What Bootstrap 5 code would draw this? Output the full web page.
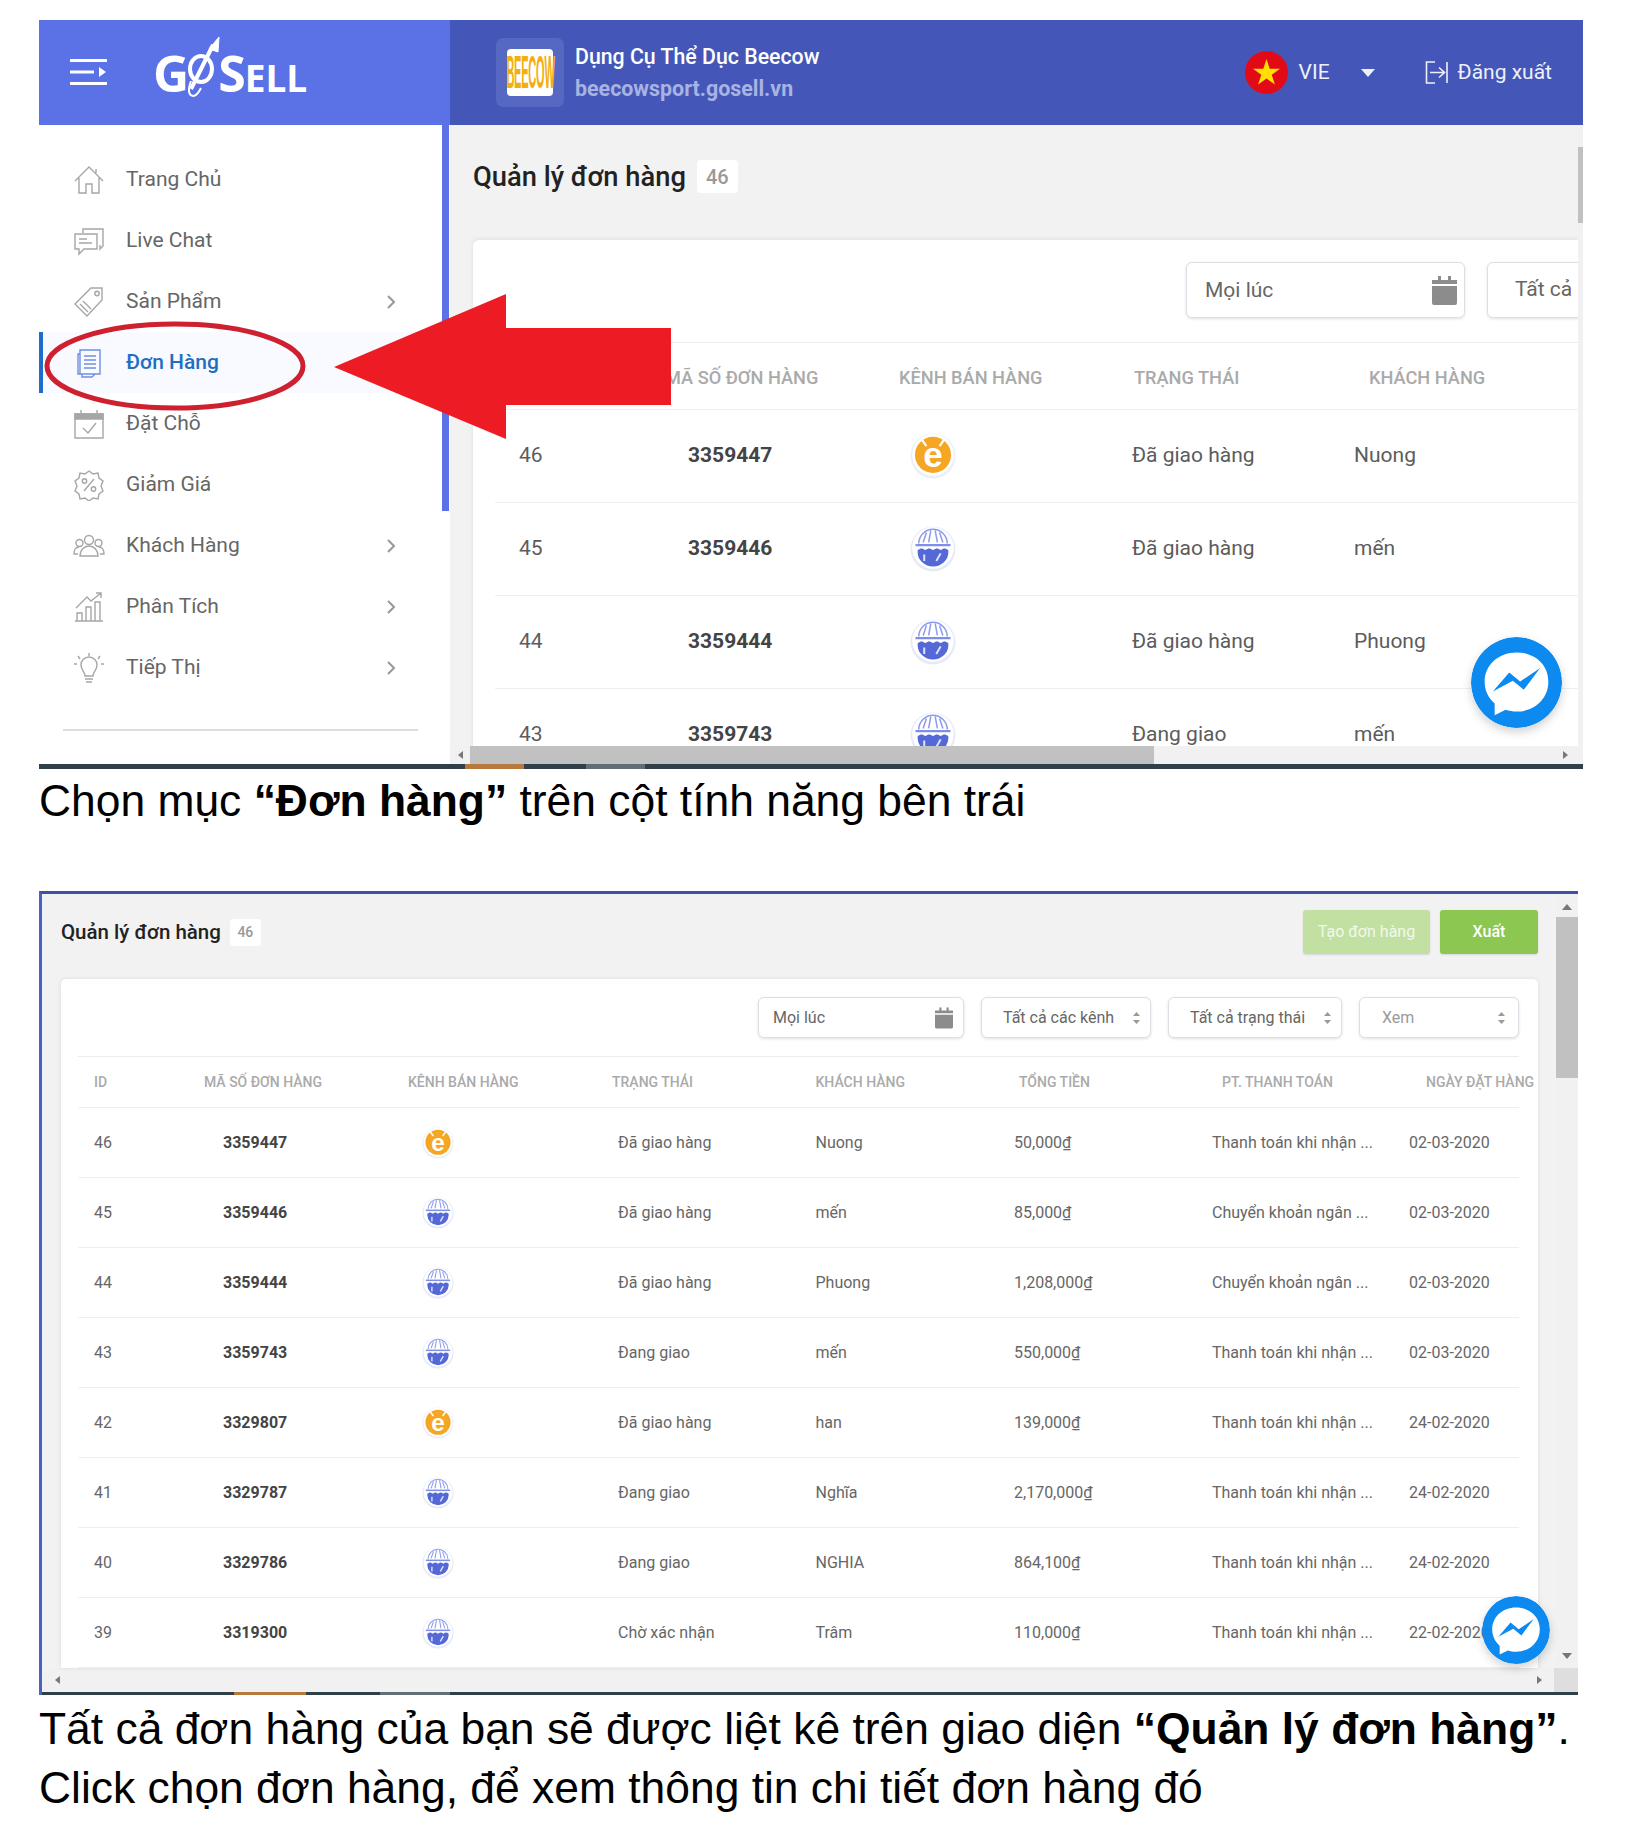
<!DOCTYPE html>
<html lang="vi">
<head>
    <meta charset="UTF-8">
    <meta name="viewport" content="width=device-width, initial-scale=1.0">
    <title>Quản lý đơn hàng - GoSell</title>
    <link href="https://cdn.jsdelivr.net/npm/bootstrap@5.3.0/dist/css/bootstrap.min.css" rel="stylesheet">
    <style>
        body {
            background: #fff;
            padding: 20px 0 0 39px;
            font-family: Roboto, "Liberation Sans", sans-serif;
            color: #555;
        }
        /* --- panel 1 --- */
        .shot-one {
            width: 1544px;
            height: 749px;
            overflow: hidden;
            position: relative;
            background: #fff;
        }
        .top-left {
            width: 411px;
            height: 105px;
            background: #5a72e6;
            padding-left: 31px;
            flex-shrink: 0;
        }
        .top-right {
            height: 105px;
            background: #4457b8;
            padding: 0 31px 0 46px;
            color: #fff;
        }
        .burger { width: 37px; height: 28px; margin-right: 46px; }
        .logo-text {
            position: relative;
            font-family: "Open Sans", Lato, sans-serif;
            font-size: 50px;
            font-weight: 700;
            color: #fff;
            line-height: 1;
            white-space: nowrap;
            letter-spacing: -1px;
        }
        .logo-small { font-size: 37px; letter-spacing: 0; }
        .logo-rocket { position: absolute; left: 32px; top: -11px; width: 36px; height: 60px; }
        .shop-box {
            width: 68px;
            height: 69px;
            background: #5668c2;
            border-radius: 7px;
            margin-right: 11px;
        }
        .shop-img {
            width: 46px;
            height: 47px;
            background: #fff;
            border-radius: 4px;
        }
        .shop-img span {
            display: block;
            color: #f3ae10;
            font-family: "Liberation Sans", sans-serif;
            font-weight: 700;
            font-size: 46px;
            line-height: 47px;
            transform: scaleX(0.24);
            letter-spacing: -1px;
        }
        .shop-name { font-size: 21.3px; font-weight: 500; line-height: 32px; }
        .shop-url { font-size: 21.4px; font-weight: 700; line-height: 32px; color: #a9b3e2; }
        .flag { width: 43px; height: 43px; margin-right: 11px; }
        .lang-txt { font-size: 21px; color: #eef0fa; margin-right: 31px; }
        .caret-down {
            width: 0;
            height: 0;
            border-left: 7px solid transparent;
            border-right: 7px solid transparent;
            border-top: 8px solid #eef0fa;
            margin-right: 50px;
        }
        .out-icon { width: 23px; height: 23px; margin-right: 10px; }
        .out-txt { font-size: 21px; color: #eef0fa; }

        .side-wrap { width: 411px; flex-shrink: 0; height: 639px; background: #fff; }
        .side-list { width: 403px; padding-top: 24px; }
        .side-list .nav-link {
            height: 61px;
            padding: 0 47px 0 34px;
            color: #666;
            font-size: 21px;
            gap: 21px;
        }
        .side-list .nav-link.active {
            background: #f8faff;
            color: #1e6fc4;
            font-weight: 500;
            border-left: 4px solid #1e6dc9;
            padding-left: 30px;
        }
        .side-ico { width: 32px; height: 32px; flex-shrink: 0; fill: none; stroke: #a6a6a6; stroke-width: 1.4; }
        .side-ico-on { stroke: #6f8fe0; }
        .side-chev { width: 8px; height: 14px; margin-left: auto; fill: none; stroke: #999; stroke-width: 2; }
        .side-sep { height: 2px; background: #ddd; margin: 31px 24px 0; }
        .side-thumb { width: 7px; height: 386px; background: #5a72e6; margin-right: 1px; }

        .main-one { background: #f2f2f2; height: 639px; width: 1133px; }
        .main-view { height: 621px; overflow: hidden; }
        .title-one { height: 115px; padding: 0 0 10px 23px; }
        .title-one h1 { font-size: 27.3px; font-weight: 500; color: #222; margin: 0; }
        .count-one {
            width: 41px;
            height: 33px;
            margin-left: 11px;
            background: #fff;
            border-radius: 4px;
            color: #999;
            font-size: 20px;
            font-weight: 500;
            margin-bottom: 2px;
        }
        .sheet-one {
            width: 1105px;
            height: 510px;
            margin-left: 23px;
            background: #fff;
            border-radius: 6px 0 0 0;
            box-shadow: 0 -1px 4px rgba(0, 0, 0, .08);
            overflow: hidden;
        }
        .filter-one { height: 102px; padding: 22px 0 0 713px; gap: 22px; }
        .picker {
            flex-shrink: 0;
            background: #fff;
            border: 1px solid #dcdfe5;
            border-radius: 6px;
            box-shadow: 0 1px 3px rgba(0, 0, 0, .12);
            color: #666;
            white-space: nowrap;
        }
        .filter-one .picker { height: 56px; font-size: 21px; }
        .picker-date { width: 279px; padding: 1px 7px 0 18px; }
        .picker-more { width: 200px; padding: 0 0 0 27px; }
        .cal-lg { width: 25px; height: 29px; fill: #8c8c8c; }

        .order-table { table-layout: fixed; margin: 0; border-top: 1px solid #ececec; }
        .order-table th, .order-table td {
            padding: 0;
            vertical-align: middle;
            white-space: nowrap;
            border-bottom: 1px solid #efefef;
            box-shadow: none;
        }
        .order-table th { color: #aaa; font-weight: 500; }
        .order-table td { color: #5c5c5c; }
        .order-table td.code-cell { font-weight: 700; color: #444; }

        .table-one { width: 1159px; margin-left: 22px; }
        .table-one th { height: 67px; font-size: 18.2px; padding-top: 4px; }
        .table-one td { height: 93px; font-size: 21px; }
        .w1a { width: 170px; } .w1b { width: 234px; } .w1c { width: 233px; } .w1d { width: 222px; } .w1e { width: 300px; }
        .table-one .c-id { padding-left: 24px; }
        .table-one td.c-code { padding-left: 23px; }
        .table-one td.c-chan { padding-left: 11px; }
        .table-one th.c-stat { padding-left: 2px; }
        .table-one th.c-cust { padding-left: 15px; }
        .chan-lg { width: 46px; height: 46px; display: block; }
        .chan-sm { width: 32px; height: 32px; display: block; }

        .hbar-one { height: 18px; background: #f1f1f1; padding-left: 8px; }
        .hbar-thumb { width: 684px; height: 18px; background: #c1c1c1; margin-left: 7px; }
        .arrow-l { width: 0; height: 0; border-top: 4px solid transparent; border-bottom: 4px solid transparent; border-right: 5px solid #777; }
        .arrow-r { width: 0; height: 0; border-top: 4px solid transparent; border-bottom: 4px solid transparent; border-left: 5px solid #777; }
        .hbar-one .arrow-r { margin-left: auto; margin-right: 10px; }
        .vbar-one { width: 5px; background: #f1f1f1; padding-top: 22px; flex-shrink: 0; }
        .vbar-one div { height: 76px; background: #c1c1c1; }

        .dark-strip { height: 5px; background: #2f4048; }
        .seg-orange { position: absolute; top: 0; bottom: 0; background: #b87a3c; }
        .seg-grey { position: absolute; top: 0; bottom: 0; background: #5f6f75; }
        .strip-one { position: relative; }
        .strip-one .seg-orange { left: 426px; width: 59px; }
        .strip-one .seg-grey { left: 547px; width: 59px; }

        .mark-over { position: absolute; left: 0; top: 0; width: 700px; height: 460px; pointer-events: none; }
        .msg-btn { position: absolute; border-radius: 50%; box-shadow: 0 4px 10px rgba(0, 0, 0, .18); }
        .msg-big { left: 1432px; top: 617px; width: 91px; height: 91px; }
        .msg-small { left: 1440px; top: 702px; width: 68px; height: 68px; }

        /* --- captions --- */
        .note-text {
            font-family: "Liberation Sans", Arial, sans-serif;
            color: #000;
            font-size: 44.4px;
            line-height: 59px;
            margin: 0;
            white-space: nowrap;
        }
        .note-one { height: 122px; padding-top: 2px; }
        .note-two { padding-top: 4px; }

        /* --- panel 2 --- */
        .shot-two {
            width: 1539px;
            height: 804px;
            position: relative;
            background: #f2f2f2;
            border-top: 3px solid #3f51a5;
            border-left: 3px solid #4a62c0;
            overflow: hidden;
        }
        .body-two { height: 774px; }
        .main-two { width: 1511px; }
        .title-two { height: 85px; padding: 16px 15px 0 19px; }
        .title-two h2 { font-size: 20.5px; font-weight: 500; color: #222; margin: 0; }
        .title-left { height: 44px; }
        .count-two {
            width: 31px;
            height: 27px;
            margin-left: 9px;
            background: #fff;
            border-radius: 3px;
            color: #999;
            font-size: 14px;
            font-weight: 500;
        }
        .btn.btn-make, .btn.btn-export {
            height: 44px;
            padding: 0;
            border: 0;
            border-radius: 3px;
            color: #fff;
            font-size: 16px;
            box-shadow: 0 1px 2px rgba(0, 0, 0, .12);
        }
        .btn.btn-make { width: 127px; background: #c3e0a3; color: #f2f8ea; margin-right: 10px; }
        .btn.btn-export { width: 98px; background: #8bc751; font-weight: 500; }
        .sheet-two {
            width: 1477px;
            height: 689px;
            margin-left: 19px;
            background: #fff;
            border-radius: 5px 5px 0 0;
            box-shadow: 0 0 4px rgba(0, 0, 0, .1);
            overflow: hidden;
        }
        .filter-two { height: 77px; padding: 18px 19px 0 0; gap: 17px; }
        .filter-two .picker { height: 41px; font-size: 16px; }
        .pick-a { width: 206px; padding: 0 10px 0 14px; }
        .pick-b { width: 170px; padding: 0 10px 0 21px; }
        .pick-c { width: 174px; padding: 0 10px 0 21px; }
        .pick-d { width: 160px; padding: 0 13px 0 22px; color: #999 !important; }
        .cal-sm { width: 18px; height: 22px; fill: #8c8c8c; }
        .updown { width: 7px; height: 12px; fill: #999; }

        .table-two { width: 1441px; margin-left: 17px; }
        .table-two th { height: 51px; font-size: 14px; }
        .table-two td { height: 70px; font-size: 16px; color: #666; }
        .w2a { width: 126px; } .w2b { width: 204px; } .w2c { width: 204px; } .w2d { width: 203.5px; }
        .w2e { width: 198.5px; } .w2f { width: 198px; } .w2g { width: 197px; } .w2h { width: 110px; }
        .table-two .c-id { padding-left: 16px; }
        .table-two td.c-code { padding-left: 19px; }
        .table-two td.c-chan { padding-left: 14px; }
        .table-two td.c-stat { padding-left: 6px; }
        .table-two th.c-total { padding-left: 5px; }
        .table-two th.c-pay { padding-left: 10px; }
        .table-two th.c-date { padding-left: 17px; }

        .vbar-two { width: 22px; margin-left: 3px; background: #f1f1f1; }
        .arrow-u { width: 0; height: 0; border-left: 5px solid transparent; border-right: 5px solid transparent; border-bottom: 6px solid #777; margin: 10px auto 7px; }
        .arrow-d { width: 0; height: 0; border-left: 5px solid transparent; border-right: 5px solid transparent; border-top: 6px solid #777; margin: auto auto 9px; }
        .vbar-two .thumb-v { height: 161px; background: #c1c1c1; }
        .hbar-two { height: 24px; background: #f1f1f1; padding-left: 13px; }
        .hbar-two .arrow-r { margin-left: auto; margin-right: 12px; }
        .corner-two { width: 24px; height: 24px; background: #dedede; }
        .strip-two { height: 3px; position: relative; }
        .strip-two .seg-orange { left: 192px; width: 72px; }
        .strip-two .seg-grey { left: 338px; width: 70px; }
    </style>
</head>
<body>
    <!-- shared icons -->
    <svg class="d-none">
        <symbol id="chan-e" viewBox="0 0 42 42">
            <circle cx="21" cy="21" r="20.500" fill="#eceef8"/>
            <circle cx="21" cy="20" r="19" fill="#fff"/>
            <circle cx="21" cy="20" r="16.500" fill="#f5a623"/>
            <path d="M10 5l5 7M32 5l-5 7" stroke="#fff" stroke-width="2"/>
            <text x="21" y="31" text-anchor="middle" font-family="Liberation Sans, sans-serif" font-weight="700" font-size="32" fill="#fff">e</text>
        </symbol>
        <symbol id="chan-shop" viewBox="0 0 42 42">
            <circle cx="21" cy="21" r="20.500" fill="#e6e9f8"/>
            <circle cx="21" cy="20" r="19" fill="#fff"/>
            <path d="M8 16a13 13 0 0 1 26 0M12 15l3-9M17 15l2-11M25 15l-2-11M30 15l-3-9" fill="none" stroke="#8d9cec" stroke-width="1.4"/>
            <path d="M5 17.500h32" stroke="#7f8fe8" stroke-width="2"/>
            <path d="M7 22c3-2 4-2 7 0 3-2 4-2 7 0 3-2 4-2 7 0 3-2 4-2 7 0v2a14 13 0 0 1-28 0z" fill="#5468d8"/>
            <path d="M13 26v6M24 32l4-7" stroke="#dfe4fb" stroke-width="1.8"/>
        </symbol>
        <symbol id="msg" viewBox="0 0 100 100">
            <circle cx="50" cy="50" r="50" fill="#0d8af0"/>
            <path d="M50 17c-20 0-35 14-35 32 0 10 4 18 11 24v13l12-6c4 1 8 2 12 2 20 0 35-14 35-33S70 17 50 17z" fill="#fff"/>
            <path d="M24 60l18-21 12 10 22-15-18 24-12-10z" fill="#0d8af0"/>
        </symbol>
        <symbol id="cal" viewBox="0 0 25 29">
            <path d="M6 0h3v5H6zM16 0h3v5h-3zM0 4h25v4H0zM0 10h25v17a2 2 0 0 1-2 2H2a2 2 0 0 1-2-2z"/>
        </symbol>
        <symbol id="updown" viewBox="0 0 7 12">
            <path d="M3.500 0L7 4H0zM3.500 12L0 8h7z"/>
        </symbol>
    </svg>

    <!-- first screenshot -->
    <div class="shot-one">
        <header class="d-flex">
            <div class="top-left d-flex align-items-center">
                <svg class="burger" viewBox="0 0 37 28" fill="#fff">
                    <path d="M0 0h37v3H0zM0 23h37v3H0zM0 11.500h24v3H0zM29 8l7 5-7 5z"/>
                </svg>
                <div class="logo-text">G<span class="opacity-0">o</span>S<span class="logo-small">ELL</span>
                    <svg class="logo-rocket" viewBox="0 0 36 60" fill="none" stroke="#fff">
                        <ellipse cx="16" cy="32" rx="11" ry="13" stroke-width="4"/>
                        <path d="M6 52L28 8" stroke-width="4"/>
                        <path d="M24 12L34 0l-1 15z" fill="#fff" stroke-width="1"/>
                        <path d="M6 44c-3 8-3 14 2 15 3 0 6-4 8-8" stroke-width="2"/>
                    </svg>
                </div>
            </div>
            <div class="top-right flex-fill d-flex align-items-center">
                <div class="shop-box d-flex align-items-center justify-content-center">
                    <div class="shop-img d-flex justify-content-center"><span>BEECOW</span></div>
                </div>
                <div>
                    <div class="shop-name">Dụng Cụ Thể Dục Beecow</div>
                    <div class="shop-url">beecowsport.gosell.vn</div>
                </div>
                <svg class="flag ms-auto" viewBox="0 0 43 43">
                    <circle cx="21.500" cy="21.500" r="21.500" fill="#e30a17"/>
                    <path d="M21.500 8l3.200 9.800H35l-8.300 6 3.200 9.800-8.400-6-8.400 6 3.200-9.800-8.300-6h10.300z" fill="#ffe000"/>
                </svg>
                <span class="lang-txt">VIE</span>
                <span class="caret-down"></span>
                <svg class="out-icon" viewBox="0 0 23 23" fill="none" stroke="#eef0fa" stroke-width="1.6">
                    <path d="M10 1H1.500v21H10M5 11.500h14M14 6.500l5.500 5-5.500 5M22 1v21"/>
                </svg>
                <span class="out-txt">Đăng xuất</span>
            </div>
        </header>
        <div class="d-flex">
            <aside class="side-wrap d-flex justify-content-between">
                <div class="side-list">
                    <nav class="nav flex-column">
                        <a class="nav-link d-flex align-items-center" href="#">
                            <svg class="side-ico" viewBox="0 0 32 32"><path d="M2 17L16 3l14 14M6 14v15h7v-9h6v9h7V14M23 5v4"/></svg>
                            Trang Chủ
                        </a>
                        <a class="nav-link d-flex align-items-center" href="#">
                            <svg class="side-ico" viewBox="0 0 32 32"><path d="M10 8V4h20v17l-3 3v-4"/><path d="M2 9h22v15H11l-5 5v-5H2zM6 14h8M6 18h13"/></svg>
                            Live Chat
                        </a>
                        <a class="nav-link d-flex align-items-center" href="#">
                            <svg class="side-ico" viewBox="0 0 32 32"><path d="M18 2h11v12L14 30 2 18z"/><circle cx="24" cy="7.500" r="2.200"/><path d="M7 18l8 8M10 15l8 8"/></svg>
                            Sản Phẩm
                            <svg class="side-chev" viewBox="0 0 8 14"><path d="M1 1l6 6-6 6"/></svg>
                        </a>
                        <a class="nav-link d-flex align-items-center active" href="#">
                            <svg class="side-ico side-ico-on" viewBox="0 0 32 32"><path d="M7 3h20v24H7zM7 27H5V7h2M11 9h12M11 13h12M11 17h12M11 21h12M9 27v3h10l3-3"/></svg>
                            Đơn Hàng
                        </a>
                        <a class="nav-link d-flex align-items-center" href="#">
                            <svg class="side-ico" viewBox="0 0 32 32"><path d="M2 6h28v24H2zM8 2v6M24 2v6M10 20l5 5 8-10"/><path d="M2 6h28v5H2z" fill="#a6a6a6"/></svg>
                            Đặt Chỗ
                        </a>
                        <a class="nav-link d-flex align-items-center" href="#">
                            <svg class="side-ico" viewBox="0 0 32 32"><path d="M16 2l4 3 5-1 1 5 4 3-2 5 2 5-4 3-1 5-5-1-4 3-4-3-5 1-1-5-4-3 2-5-2-5 4-3 1-5 5 1zM21 10L11 22"/><circle cx="11.500" cy="12" r="2.200"/><circle cx="20.500" cy="20" r="2.200"/></svg>
                            Giảm Giá
                        </a>
                        <a class="nav-link d-flex align-items-center" href="#">
                            <svg class="side-ico" viewBox="0 0 32 32"><circle cx="16" cy="10" r="4.500"/><circle cx="6.500" cy="13" r="3.500"/><circle cx="25.500" cy="13" r="3.500"/><path d="M7 26c0-6 4-10 9-10s9 4 9 10zM5 24H1c0-4 2-7 5-7M27 24h4c0-4-2-7-5-7"/></svg>
                            Khách Hàng
                            <svg class="side-chev" viewBox="0 0 8 14"><path d="M1 1l6 6-6 6"/></svg>
                        </a>
                        <a class="nav-link d-flex align-items-center" href="#">
                            <svg class="side-ico" viewBox="0 0 32 32"><path d="M2 30h28M4 30v-8h5v8M13 30V16h5v14M22 30V11h5v19M3 17L14 6l4 4L28 2M23 2h5v5"/></svg>
                            Phân Tích
                            <svg class="side-chev" viewBox="0 0 8 14"><path d="M1 1l6 6-6 6"/></svg>
                        </a>
                        <a class="nav-link d-flex align-items-center" href="#">
                            <svg class="side-ico" viewBox="0 0 32 32"><path d="M12 24c0-4-4-6-4-11a8 8 0 0 1 16 0c0 5-4 7-4 11zM12 27h8M13 30h6M16 1v3M5 4l2 3M27 4l-2 3M1 12h3M31 12h-3"/></svg>
                            Tiếp Thị
                            <svg class="side-chev" viewBox="0 0 8 14"><path d="M1 1l6 6-6 6"/></svg>
                        </a>
                    </nav>
                    <div class="side-sep"></div>
                </div>
                <div class="side-thumb"></div>
            </aside>
            <main class="main-one d-flex">
                <div class="flex-fill">
                    <div class="main-view">
                        <div class="title-one d-flex align-items-center">
                            <h1>Quản lý đơn hàng</h1>
                            <span class="count-one d-flex align-items-center justify-content-center">46</span>
                        </div>
                        <div class="sheet-one">
                            <div class="filter-one d-flex">
                                <div class="picker picker-date d-flex align-items-center justify-content-between">
                                    <span>Mọi lúc</span>
                                    <svg class="cal-lg"><use href="#cal"/></svg>
                                </div>
                                <div class="picker picker-more d-flex align-items-center">Tất cả các kênh</div>
                            </div>
                            <table class="table order-table table-one">
                                <colgroup><col class="w1a"><col class="w1b"><col class="w1c"><col class="w1d"><col class="w1e"></colgroup>
                                <thead>
                                    <tr><th class="c-id"></th><th class="c-code">MÃ SỐ ĐƠN HÀNG</th><th class="c-chan">KÊNH BÁN HÀNG</th><th class="c-stat">TRẠNG THÁI</th><th class="c-cust">KHÁCH HÀNG</th></tr>
                                </thead>
                                <tbody>
                                    <tr><td class="c-id">46</td><td class="c-code code-cell">3359447</td><td class="c-chan"><svg class="chan-lg"><use href="#chan-e"/></svg></td><td>Đã giao hàng</td><td>Nuong</td></tr>
                                    <tr><td class="c-id">45</td><td class="c-code code-cell">3359446</td><td class="c-chan"><svg class="chan-lg"><use href="#chan-shop"/></svg></td><td>Đã giao hàng</td><td>mến</td></tr>
                                    <tr><td class="c-id">44</td><td class="c-code code-cell">3359444</td><td class="c-chan"><svg class="chan-lg"><use href="#chan-shop"/></svg></td><td>Đã giao hàng</td><td>Phuong</td></tr>
                                    <tr><td class="c-id">43</td><td class="c-code code-cell">3359743</td><td class="c-chan"><svg class="chan-lg"><use href="#chan-shop"/></svg></td><td>Đang giao</td><td>mến</td></tr>
                                </tbody>
                            </table>
                        </div>
                    </div>
                    <div class="hbar-one d-flex align-items-center">
                        <span class="arrow-l"></span>
                        <div class="hbar-thumb"></div>
                        <span class="arrow-r"></span>
                    </div>
                </div>
                <div class="vbar-one"><div></div></div>
            </main>
        </div>
        <div class="dark-strip strip-one"><span class="seg-orange"></span><span class="seg-grey"></span></div>

        <!-- red marks drawn over the screenshot -->
        <svg class="mark-over" viewBox="0 0 700 460">
            <ellipse cx="136" cy="346" rx="128" ry="42" fill="none" stroke="#cf2030" stroke-width="5"/>
            <path d="M295 347L467 274v34h165v77H467v34z" fill="#ed1c24"/>
        </svg>
        <svg class="msg-btn msg-big"><use href="#msg"/></svg>
    </div>

    <div class="note-one">
        <p class="note-text">Chọn mục <b>“Đơn hàng”</b> trên cột tính năng bên trái</p>
    </div>

    <!-- second screenshot -->
    <div class="shot-two">
        <div class="body-two d-flex">
            <div class="main-two">
                <div class="title-two d-flex justify-content-between">
                    <div class="title-left d-flex align-items-center">
                        <h2>Quản lý đơn hàng</h2>
                        <span class="count-two d-flex align-items-center justify-content-center">46</span>
                    </div>
                    <div class="d-flex">
                        <button type="button" class="btn btn-make">Tạo đơn hàng</button>
                        <button type="button" class="btn btn-export">Xuất</button>
                    </div>
                </div>
                <div class="sheet-two">
                    <div class="filter-two d-flex justify-content-end">
                        <div class="picker pick-a d-flex align-items-center justify-content-between"><span>Mọi lúc</span><svg class="cal-sm"><use href="#cal"/></svg></div>
                        <div class="picker pick-b d-flex align-items-center justify-content-between"><span>Tất cả các kênh</span><svg class="updown"><use href="#updown"/></svg></div>
                        <div class="picker pick-c d-flex align-items-center justify-content-between"><span>Tất cả trạng thái</span><svg class="updown"><use href="#updown"/></svg></div>
                        <div class="picker pick-d d-flex align-items-center justify-content-between"><span>Xem</span><svg class="updown"><use href="#updown"/></svg></div>
                    </div>
                    <table class="table order-table table-two">
                        <colgroup><col class="w2a"><col class="w2b"><col class="w2c"><col class="w2d"><col class="w2e"><col class="w2f"><col class="w2g"><col class="w2h"></colgroup>
                        <thead>
                            <tr><th class="c-id">ID</th><th>MÃ SỐ ĐƠN HÀNG</th><th>KÊNH BÁN HÀNG</th><th>TRẠNG THÁI</th><th>KHÁCH HÀNG</th><th class="c-total">TỔNG TIỀN</th><th class="c-pay">PT. THANH TOÁN</th><th class="c-date">NGÀY ĐẶT HÀNG</th></tr>
                        </thead>
                        <tbody>
                            <tr><td class="c-id">46</td><td class="c-code code-cell">3359447</td><td class="c-chan"><svg class="chan-sm"><use href="#chan-e"/></svg></td><td class="c-stat">Đã giao hàng</td><td>Nuong</td><td>50,000₫</td><td>Thanh toán khi nhận ...</td><td>02-03-2020</td></tr>
                            <tr><td class="c-id">45</td><td class="c-code code-cell">3359446</td><td class="c-chan"><svg class="chan-sm"><use href="#chan-shop"/></svg></td><td class="c-stat">Đã giao hàng</td><td>mến</td><td>85,000₫</td><td>Chuyển khoản ngân ...</td><td>02-03-2020</td></tr>
                            <tr><td class="c-id">44</td><td class="c-code code-cell">3359444</td><td class="c-chan"><svg class="chan-sm"><use href="#chan-shop"/></svg></td><td class="c-stat">Đã giao hàng</td><td>Phuong</td><td>1,208,000₫</td><td>Chuyển khoản ngân ...</td><td>02-03-2020</td></tr>
                            <tr><td class="c-id">43</td><td class="c-code code-cell">3359743</td><td class="c-chan"><svg class="chan-sm"><use href="#chan-shop"/></svg></td><td class="c-stat">Đang giao</td><td>mến</td><td>550,000₫</td><td>Thanh toán khi nhận ...</td><td>02-03-2020</td></tr>
                            <tr><td class="c-id">42</td><td class="c-code code-cell">3329807</td><td class="c-chan"><svg class="chan-sm"><use href="#chan-e"/></svg></td><td class="c-stat">Đã giao hàng</td><td>han</td><td>139,000₫</td><td>Thanh toán khi nhận ...</td><td>24-02-2020</td></tr>
                            <tr><td class="c-id">41</td><td class="c-code code-cell">3329787</td><td class="c-chan"><svg class="chan-sm"><use href="#chan-shop"/></svg></td><td class="c-stat">Đang giao</td><td>Nghĩa</td><td>2,170,000₫</td><td>Thanh toán khi nhận ...</td><td>24-02-2020</td></tr>
                            <tr><td class="c-id">40</td><td class="c-code code-cell">3329786</td><td class="c-chan"><svg class="chan-sm"><use href="#chan-shop"/></svg></td><td class="c-stat">Đang giao</td><td>NGHIA</td><td>864,100₫</td><td>Thanh toán khi nhận ...</td><td>24-02-2020</td></tr>
                            <tr><td class="c-id">39</td><td class="c-code code-cell">3319300</td><td class="c-chan"><svg class="chan-sm"><use href="#chan-shop"/></svg></td><td class="c-stat">Chờ xác nhận</td><td>Trâm</td><td>110,000₫</td><td>Thanh toán khi nhận ...</td><td>22-02-2020</td></tr>
                        </tbody>
                    </table>
                </div>
            </div>
            <div class="vbar-two d-flex flex-column">
                <span class="arrow-u"></span>
                <div class="thumb-v"></div>
                <span class="arrow-d"></span>
            </div>
        </div>
        <div class="hbar-two d-flex align-items-center">
            <span class="arrow-l"></span>
            <span class="arrow-r"></span>
            <div class="corner-two"></div>
        </div>
        <div class="dark-strip strip-two"><span class="seg-orange"></span><span class="seg-grey"></span></div>
        <svg class="msg-btn msg-small"><use href="#msg"/></svg>
    </div>

    <div class="note-two">
        <p class="note-text">Tất cả đơn hàng của bạn sẽ được liệt kê trên giao diện <b>“Quản lý đơn hàng”</b>.</p>
        <p class="note-text">Click chọn đơn hàng, để xem thông tin chi tiết đơn hàng đó</p>
    </div>

    <script src="https://cdn.jsdelivr.net/npm/bootstrap@5.3.0/dist/js/bootstrap.bundle.min.js"></script>
</body>
</html>
